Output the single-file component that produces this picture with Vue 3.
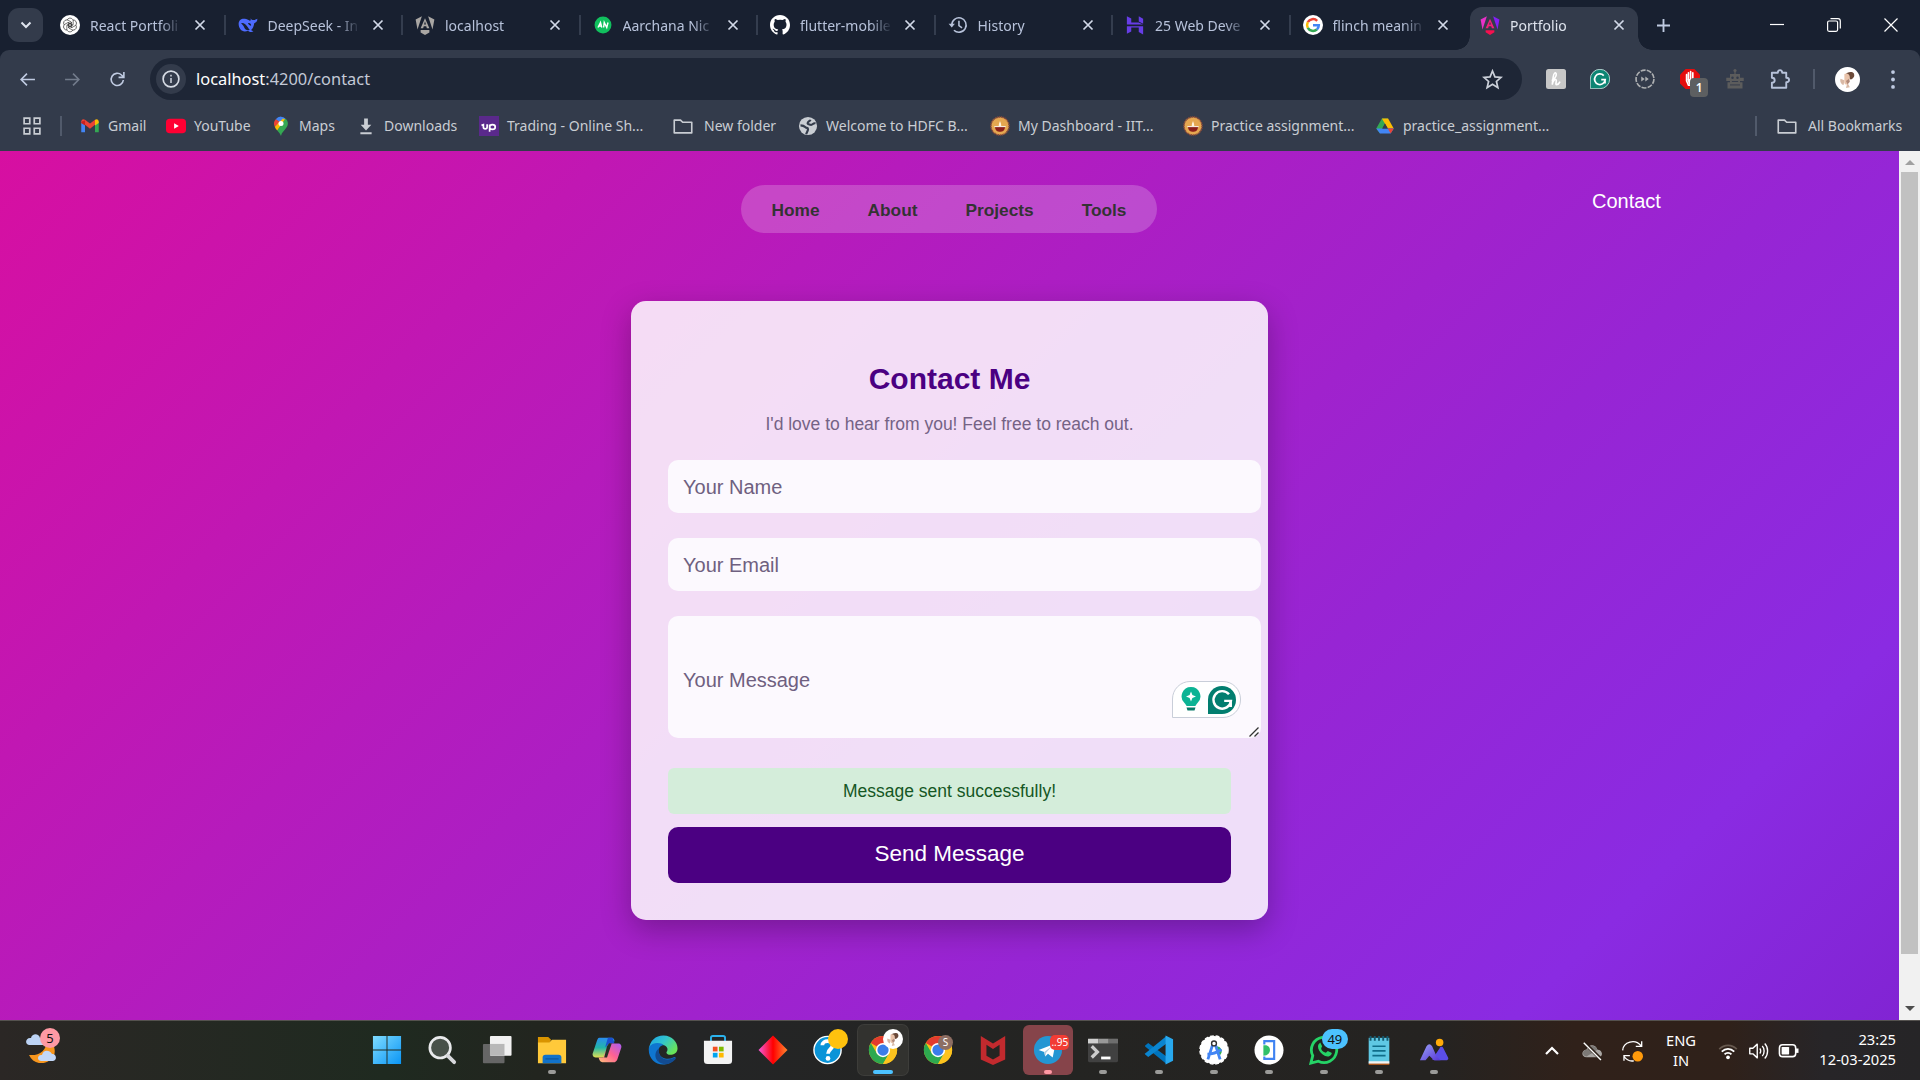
<script setup>
const svgChrome = '<circle cx="16" cy="16" r="15" fill="#fbc116"/><path d="M16 16 L3 8.5 A15 15 0 0 1 29 8.5 L16 8.5Z" fill="#e33b2e"/><path d="M3 8.5 A15 15 0 0 0 16 31 L22.5 19.8 L9.5 19.8Z" fill="#2da94f"/><path d="M29 8.5 H16 L22.5 19.8 L16 31 A15 15 0 0 0 29 8.5Z" fill="#fcc31e"/><circle cx="16" cy="16" r="7.6" fill="#fff"/><circle cx="16" cy="16" r="6" fill="#3b7de9"/>'

const petal = (a) => `<path d="M11.500 8a5 5 0 0 1 9-.5c1 2 .5 3 .5 8l-5 3-5-3" transform="rotate(${a} 16 16)"/>`

const icons = {
  openai: '<circle cx="16" cy="16" r="16" fill="#fff"/><g fill="none" stroke="#333" stroke-width="1.100">' + [0, 60, 120, 180, 240, 300].map(petal).join('') + '</g>',
  deepseek: '<path d="M1 14c0-6 5-9 10-8 3 0 5 2 8 3 1 1 2-1 1-4 1 2 3 3 5 3 2 0 4-1 6-2 0 4-2 6-5 7-1 5-2 8-5 11 1 1 3 2 4 2-3 2-7 1-9-1C8 29 1 23 1 14z" fill="#4d6bfe"/><path d="M5 13c4-1 8 2 11 7 1 2 2 3 3 4-5 1-8-1-9-4-1-3-3-5-5-7zM16 13c3-1 5 1 5 4-2 0-4-2-5-4z" fill="#182030"/>',
  angularGray: '<path d="M1 7 11 2 4 23 1 7zM31 7 21 2l7 21zM16 5l7 16h-4l-1-3h-4l-1 3H9z" fill="#a9a6a3"/><path d="M14.5 15h3L16 10z" fill="#182030"/><path d="M9 24h14v4l-7 4-7-4z" fill="#a9a6a3"/>',
  an: '<circle cx="16" cy="16" r="13.500" fill="#11c05e"/><path d="m8 20 4-8 2 8m-4-2.500h4M17 20l1-8 4 8 2-8" fill="none" stroke="#fff" stroke-width="2.300"/>',
  github: '<path d="M16 0C7 0 0 7 0 16c0 7 4.600 13 11 15.200.8.100 1.100-.3 1.100-.8v-3c-4.500 1-5.400-2-5.400-2-.7-1.900-1.800-2.400-1.800-2.400-1.500-1 .1-1 .1-1 1.600.1 2.500 1.700 2.500 1.700 1.400 2.500 3.800 1.800 4.700 1.400.1-1.100.6-1.800 1-2.200-3.600-.4-7.300-1.800-7.300-7.900 0-1.800.6-3.200 1.700-4.300-.2-.4-.7-2.100.2-4.300 0 0 1.300-.4 4.400 1.600a15 15 0 0 1 8 0c3-2 4.400-1.600 4.400-1.600.9 2.200.3 3.900.2 4.300 1 1.100 1.600 2.500 1.600 4.300 0 6.200-3.700 7.500-7.300 7.900.6.5 1.100 1.500 1.100 3v4.500c0 .4.300.9 1.100.8C27.500 29 32 23 32 16 32 7 25 0 16 0z" fill="#fff"/>',
  history: '<path d="M6 16a11.500 11.500 0 1 1 3.500 8.300M17.500 9v8l5 3.500" fill="none" stroke="#b7c2da" stroke-width="2.500"/><path d="M1 14h10l-5 6z" fill="#b7c2da"/>',
  hostinger: '<path d="M3 2l7 3.500V12h12l7 3H3zM22 2l7 4v8l-7-3.500zM3 30V18h19l7 0v2H10v6.500zM22 20h7v11l-7-4z" fill="#673de6"/>',
  google: '<circle cx="16" cy="16" r="16" fill="#fff"/><g fill="none" stroke-width="4"><path d="M22.700 9.300A9.500 9.500 0 0 0 7.700 11.500" stroke="#ea4335"/><path d="M7.700 11.500a9.500 9.500 0 0 0 0 9" stroke="#fbbc05"/><path d="M7.700 20.500a9.500 9.500 0 0 0 14.500 2.700" stroke="#34a853"/><path d="M16 16.300h9.300a9.500 9.500 0 0 1-3.100 6.900" stroke="#4285f4"/></g>',
  angular: '<defs><linearGradient id="ang" x1="0" y1="0" x2="1" y2="0"><stop offset="0" stop-color="#f42bb5"/><stop offset=".5" stop-color="#ee1a86"/><stop offset="1" stop-color="#7a1cff"/></linearGradient></defs><path d="M1 7 11 2 4 23 1 7z" fill="#e831c8"/><path d="M31 7 21 2l7 21z" fill="#8320f5"/><path d="M16 6l7 15h-4l-1-3h-4l-1 3H9z" fill="#f0207a"/><path d="M14.500 15h3L16 11z" fill="#333b4b"/><path d="M9 24.500h14v3L16 32l-7-4.500z" fill="#f5104f"/>',

  gmail: '<path d="M2 8v18h6V14z" fill="#4285f4"/><path d="M30 8v18h-6V14z" fill="#34a853"/><path d="M2 10c0-5 3-6 6-4l8 6 8-6v8l-8 6.500L8 14 2 11z" fill="#ea4335"/><path d="M24 6c3-2 6-1 6 4v1l-6 4z" fill="#fbbc04"/><path d="M2 9v2l6 4V7z" fill="#c5221f"/>',
  youtube: '<rect y="4.500" width="32" height="23" rx="6" fill="#f03"/><path d="m13 11.500 7.500 4.500-7.500 4.500z" fill="#fff"/>',
  maps: '<path d="M16 1a11 11 0 0 0-8.500 4l8.500 7 7-8a11 11 0 0 0-7-3z" fill="#4285f4"/><path d="M7.500 5A11 11 0 0 0 6 17l9-7z" fill="#ea4335"/><path d="M6 17c1 2 2 4 4 6L24 6l-5-2z" fill="#fbbc04"/><path d="M23 4c5 4 5 10 2 14-4 6-8 8-9 14-1-3-3-6-6-9z" fill="#34a853"/><circle cx="16" cy="12" r="4" fill="#fff"/>',
  download: '<path d="M13 4h6v10h5.500L16 23 7.500 14H13zM7 26h18v3H7z" fill="#c9cdd3"/>',
  up: '<path d="M0 0h32v32H0z" fill="#5a298b"/><path d="M4 15l3-1v3.500c0 4 6 4 6 0V13M17 25V13.500M17 17.500c0-5 9-5 9 0s-9 5-9 0" fill="none" stroke="#fff" stroke-width="2.700"/>',
  folder: '<path d="M2 6.500h10l3.500 3.500H30V27H2z" fill="none" stroke="#c9cdd3" stroke-width="2.600" stroke-linejoin="round"/>',
  globe: '<circle cx="16" cy="16" r="14.500" fill="#c9cdd3"/><path d="M4 15c5 0 6 1 8 3s4 0 4 3-2 5-3 8M28 12c-4-2-4 3-8 2-3-1-6-1-4-4 1-2 3-1 4-4" fill="none" stroke="#333b4b" stroke-width="3.500"/>',
  iit: '<circle cx="16" cy="16" r="14.500" fill="#e5a750" stroke="#8c4b3a" stroke-width="2.500" stroke-dasharray="2 1"/><path d="M8 17h16c0 6-4 8-8 8s-8-2-8-8z" fill="#8b1f1a"/><path d="M14 16c0-4 1-5 2-8 1 3 2 4 2 8z" fill="#fff2dd"/><path d="M7 17h18" stroke="#fff" stroke-width="1.500"/>',
  drive: '<path d="M11 4h10l-5 8-8 16-6-8z" fill="#34a853"/><path d="M11 4h10l9 16H20.500z" fill="#fbbc04"/><path d="M8 28 2 20h28l-5 8z" fill="#4285f4"/><path d="M20.500 20H30l-5 8z" fill="#ea4335"/><path d="m16 12 4.500 8h-9z" fill="#333b4b"/>',

  honey: '<rect width="32" height="32" rx="4" fill="#c7c7c7"/><path d="M10 18c6-3 8-11 5-12-4 0-4 12-5 19 1-6 4-9 6-8s-2 8 1 8 4-2 5-4" fill="none" stroke="#fff" stroke-width="2.600" stroke-linecap="round"/>',
  grammarly: '<path d="M.5 31.500V16A15.500 15.500 0 1 1 16 31.500z" fill="#0d8573" stroke="#b7d6d3" stroke-width="1.500"/><path d="M22 10.500a8.500 8.500 0 1 0 2.300 6.500H18m6 0v6" fill="none" stroke="#fff" stroke-width="2.800"/>',
  ffwd: '<circle cx="16" cy="16" r="14.300" fill="none" stroke="#aeb0b2" stroke-width="2.600" stroke-dasharray="8 1.980"/><path d="m10 12 5.500 4-5.500 4zm6.500 0 5.500 4-5.500 4z" fill="#aeb0b2"/>',
  adblock: '<path d="M9 0h14l9 9v14l-9 9H9l-9-9V9z" fill="#e50d0d"/><path d="M10.500 9v10l3 7h8l3-9M13.500 18V6M17 17V4M20.500 17V6" fill="none" stroke="#fff" stroke-width="2.600" stroke-linecap="round"/><path d="M12 16h10v9h-8z" fill="#fff"/>',
  robot: '<circle cx="16" cy="2.500" r="2.500" fill="#5c5c5c"/><path d="M15 3h2v5h7v6h6v5h-6v2h4v10H4V21h4v-2H2v-5h6V8h7z" fill="#5c5c5c"/><circle cx="12" cy="14" r="2" fill="#333b4b"/><circle cx="20" cy="14" r="2" fill="#333b4b"/><path d="M11 20h10M8 25.500h16" stroke="#333b4b" stroke-width="1.500"/>',
  puzzle: '<path d="M3 6h9.500c0-5.500 7-5.500 7 0H26v8c6 0 6 7 0 7v9H3v-8c6 0 6-8 0-8z" fill="none" stroke="#b7c2da" stroke-width="3" stroke-linejoin="round"/>',
  avatar: '<circle cx="16" cy="16" r="16" fill="#fff"/><path d="M13 10c2-4 9-5 11-2 2 4-1 7-4 8z" fill="#6b4a3a"/><path d="M12 9c3-2 7 0 7 4l-1 7c-3 4-7 3-6-2z" fill="#e9c3aa"/><path d="M7 15l5 2-1 6c-3-1-5-4-4-8zM16 20l3 6-5 1z" fill="#d9b9a5"/><path d="m14 18 4-3 1 4-3 3z" fill="#b08a7a"/>',
  back: '<path d="M30 16H4M15 5 4 16l11 11" fill="none" stroke="#c0cbe2" stroke-width="3"/>',
  forward: '<path d="M2 16h26M17 5l11 11-11 11" fill="none" stroke="#727b8b" stroke-width="3"/>',
  reload: '<path d="M27 17a11.500 11.500 0 1 1-3.500-9.500L28 12M28 2v10H18" fill="none" stroke="#c0cbe2" stroke-width="3"/>',
  info: '<circle cx="16" cy="16" r="14" fill="none" stroke="#d6dbe4" stroke-width="3"/><path d="M16 14v9M16 8.500v3" stroke="#d6dbe4" stroke-width="2.600"/>',
  star: '<path d="m16 3 3.700 9 9.300.800-7 6.200 2.200 9.500L16 23.400 7.800 28.500 10 19 3 12.800l9.300-.8z" fill="none" stroke="#ccd1da" stroke-width="2.600"/>',
  apps: '<path d="M2 2h10v10H2zM20 2h10v10H20zM2 20h10v10H2zM20 20h10v10H20z" fill="none" stroke="#c9cdd3" stroke-width="3"/>',

  win: '<defs><linearGradient id="wi" x1="0" y1="0" x2="1" y2="1"><stop offset="0" stop-color="#7fdcff"/><stop offset="1" stop-color="#0a95f5"/></linearGradient></defs><path d="M1 1h14.500v14.500H1zM16.500 1H31v14.500H16.500zM1 16.500h14.500V31H1zM16.500 16.500H31V31H16.500z" fill="url(#wi)"/>',
  search: '<circle cx="14" cy="13.500" r="11" fill="#48514a" stroke="#e9eaec" stroke-width="2.800"/><path d="m22 22 7 7" stroke="#d7d8dc" stroke-width="4" stroke-linecap="round"/>',
  taskview: '<rect x="1" y="9.500" width="23" height="20.500" rx="1" fill="#666"/><rect x="8.500" y="1" width="23" height="21" rx="1" fill="#f1f1f1"/><path d="M8.500 9.500H24V22H8.500z" fill="#b8b8b8"/>',
  explorer: '<path d="M1 2h11l3 3-2 4H1z" fill="#d99400"/><path d="M1 8h12l3-3h15v25H1z" fill="#ffc93a"/><path d="M6 30v-6c0-2 1-3 3-3h14c2 0 3 1 3 3v6z" fill="#1172c9"/><path d="M9 25.500h14" stroke="#0b4c91"/>',
  copilot: '<defs><linearGradient id="c1" x1="0" y1="0" x2="0" y2="1"><stop offset="0" stop-color="#2a8df0"/><stop offset=".5" stop-color="#22b6a8"/><stop offset="1" stop-color="#e2e052"/></linearGradient><linearGradient id="c2" x1="1" y1="0" x2="0" y2="1"><stop offset="0" stop-color="#a95cf5"/><stop offset=".5" stop-color="#ff6292"/><stop offset="1" stop-color="#ffc07a"/></linearGradient></defs><path d="M8 3h13c2 0 3 2 3 4h-5l-5 15c-1 2-3 2-5 2H4c-3 0-4-3-3-5L5 7c1-2 1-4 3-4z" fill="url(#c1)"/><path d="M17 3h5l2 6h-6l-4 4z" fill="#1a4fd0"/><path d="M24 9h4c3 0 4 3 3 5l-4 12c-1 2-2 3-4 3H11c-2 0-3-2-4-5h5l5-13c1-2 3-2 7-2z" fill="url(#c2)"/><path d="m16 12 2-3h3l-5 15h-3z" fill="#253026"/>',
  edge: '<defs><linearGradient id="e1" x1="0" y1="0" x2="1" y2=".6"><stop offset="0" stop-color="#1ba0e8"/><stop offset=".5" stop-color="#31c4cf"/><stop offset="1" stop-color="#69e45a"/></linearGradient></defs><path d="M1 15C2 6 8 .5 16.500.5 26 .5 31.500 8 31.500 14c0 5-4 7-8 7-3 0-5-2-3-4 2-5-5-8-9-6-5 2-10 6-10.500 4z" fill="url(#e1)"/><path d="M1 13c3-5 12-6 16-2-5 0-7 5-5 9 2 5 9 7 15 4 2-1 3 0 2 1-4 5-9 6.500-13 6.500C7 31.500-.5 24 1 13z" fill="#0f76d0"/><path d="M12 14c-2 5 2 12 9 12 3 0 5-1 7-2 2 0 2 1 1 2-5 6-13 6-17 3-6-4-5-12 0-15z" fill="#124b91"/>',
  store: '<path d="M8.500 8V3c0-1 1-2 2-2h11c1 0 2 1 2 2v5" fill="none" stroke="#2bb3ee" stroke-width="2"/><path d="M1 6h30v21c0 3-1 4-4 4H5c-3 0-4-1-4-4z" fill="#f3f3f3"/><path d="M10.500 12.500h5v5h-5z" fill="#f25022"/><path d="M17 12.500h5v5h-5z" fill="#7fba00"/><path d="M10.500 19h5v5h-5z" fill="#00a4ef"/><path d="M17 19h5v5h-5z" fill="#ffb900"/>',
  diamond: '<defs><linearGradient id="di"><stop offset=".05" stop-color="#f551c7"/><stop offset=".5" stop-color="#f00"/><stop offset=".95" stop-color="#ff7a2a"/></linearGradient></defs><path d="m16 .5 15.500 15.500L16 31.500.500 16z" fill="url(#di)"/>',
  help: '<circle cx="15.500" cy="16" r="14.500" fill="#0a94d8" stroke="#fff" stroke-width="1.500"/><path d="M10 11c0-6 11-6 11 0 0 4-5 4-5 9" fill="none" stroke="#fff" stroke-width="4"/><circle cx="16" cy="25" r="2.500" fill="#fff"/>',
  chrome: svgChrome,
  mcafee: '<path d="m3 1 13 8L29 1v25l-13 6-13-6z" fill="#c22a2e"/><path d="m9 10.500 7 4.500 7-4.500V22l-7 4-7-4z" fill="#242422"/>',
  telegram: '<circle cx="16" cy="16" r="15" fill="#2496d3"/><path d="M6 16 24 9l-3 15-5-4-3 3-1-5z" fill="#fff"/><path d="m12 18 8-6-6 7-1 4z" fill="#b6cfe0"/>',
  terminal: '<rect y="4" width="32" height="25" rx="1.500" fill="#414141"/><path d="M0 4h11v5H0z" fill="#d0d0d0"/><path d="M11 4h11v5H11z" fill="#999"/><path d="M22 4h10v5H22z" fill="#6e6e6e"/><path d="m4 12 6 6-6 6" fill="none" stroke="#ccc" stroke-width="3.500"/><path d="M14 24.500h10" stroke="#fff" stroke-width="3"/>',
  vscode: '<path d="m1 11 3-2.500 20 15V31L3 23z" fill="none"/><path d="m1 11.500 3.500-3L24 23v8L1.500 12.500z" fill="#0074bd"/><path d="m1 20.500 3.500 3L24 9V1L1.500 19.500z" fill="#0a85d0"/><path d="m23 .5 8 4v23l-8 4z" fill="#28a8ee"/>',
  studio: '<circle cx="16" cy="16" r="15" fill="#fff" stroke="#fff" stroke-width="1.500" stroke-dasharray="4 2"/><path d="M19 12a5.500 5.500 0 0 1 4 9l-3-1z" fill="#2fae58"/><path d="M15 9 9.500 26M17 9l5.500 17M9 20.500c4 0 9-1 15-5" fill="none" stroke="#4285f4" stroke-width="3"/><circle cx="16" cy="9" r="2.600" fill="#fff" stroke="#333" stroke-width="1.500"/>',
  emulator: '<circle cx="16" cy="16" r="15.500" fill="#fff"/><path d="M10 11c5-1 7 2 7 5s-2 6-7 6z" fill="#30c06a"/><path d="M11 10V6.500h10.500v19H11V23" fill="none" stroke="#3f83f2" stroke-width="2.300"/>',
  whatsapp: '<path d="m2 30 2-8A13.500 13.500 0 1 1 10 28z" fill="#20231f" stroke="#25d366" stroke-width="3"/><path d="M11 9c-4 3 1 13 9 14 3 0 5-3 4-4l-4-2-2 2c-3-1-5-3-5-5l1-2-2-4z" fill="#25d366"/>',
  notepad: '<path d="M5 3h22v27H5z" fill="#5fc8e4"/><path d="M5 28h22v3H5z" fill="#f3f3f3"/><path d="M5 30.500h22V32H5z" fill="#a8541b"/><path d="M7 1v5m4.500-5v5M16 1v5m4.500-5v5M25 1v5" stroke="#14596f" stroke-width="2"/><path d="M9 12h14M9 17h14M9 22h14" stroke="#106d8a" stroke-width="1.800"/>',
  photos: '<defs><linearGradient id="ph" x1="0" y1="0" x2="1" y2="1"><stop offset="0" stop-color="#9aa2f6"/><stop offset="1" stop-color="#5636d6"/></linearGradient></defs><circle cx="22" cy="8" r="4" fill="#ffaa09"/><path d="M14 26 22 14c1-2 3-2 4 0l5 10c1 2-1 3-2 3H17z" fill="#5b4ee6"/><path d="M1 27 8 12c2-3 4-3 6 0l4 9c1 2 3 4 5 6H16l-5-5-4 5z" fill="url(#ph)"/>',

  weather: '<path d="M3 24c10 1 18-4 18-16 9 4 10 16 4 20-7 7-18 5-22-4z" fill="#f7961e"/><path d="M17 15c4-2 4-5 4-8 4 2 6 6 6 9z" fill="#ffb72c"/><path d="M3 14c-5-1-3-8 2-7 1-5 8-5 9 0h3v7z" fill="#bcd3f5"/><path d="M15 30c-5-1-3-7 1-6 1-5 7-6 10-1 4-1 6 6 1 7z" fill="#c3d8f8"/>',
  cloudoff: '<path d="M8 25c-8 0-8-11 0-11 2-8 13-9 16 0 8 0 9 11 1 11z" fill="#a9a6a3"/><path d="M10 13c4-7 12-5 14 1L8 24c-7-1-7-10 2-11z" fill="#7c7976"/><path d="m5 4 24 24" stroke="#2c2018" stroke-width="5"/><path d="m4 4 25 25" stroke="#fff" stroke-width="2"/>',
  sync: '<path d="M1 15C2 2 20-3 29 8M30 1v8h-9M3 31v-8h9M3 24c4 6 9 8 15 7" fill="none" stroke="#fff" stroke-width="2"/><circle cx="24" cy="24" r="8" fill="#ff9a0b"/>',
  wifi: '<path d="M2 13c8-8 20-8 28 0" fill="none" stroke="#67594f" stroke-width="2.700"/><path d="M6 17c6-6 14-6 20 0M10.500 21.500c3-3.500 8-3.500 11 0" fill="none" stroke="#fff" stroke-width="2.800"/><circle cx="16" cy="26" r="3" fill="#fff"/>',
  volume: '<path d="M2 11.500h5L14 5v22l-7-6.500H2z" fill="none" stroke="#fff" stroke-width="2.200" stroke-linejoin="round"/><path d="M18 12c2 2 2 6 0 8M22 8c4 4 4 12 0 16M26 4c6 6 6 18 0 24" fill="none" stroke="#fff" stroke-width="2.200"/>',
  battery: '<rect x="1.500" y="6" width="26" height="19" rx="5" fill="none" stroke="#fff" stroke-width="2.500"/><rect x="5" y="9.500" width="12" height="12" rx="1" fill="#fff"/><path d="M30 12v7" stroke="#fff" stroke-width="4"/>',
}

const tabs = [
  { icon: 'openai', title: 'React Portfoli' },
  { icon: 'deepseek', title: 'DeepSeek - In' },
  { icon: 'angularGray', title: 'localhost' },
  { icon: 'an', title: 'Aarchana Nic' },
  { icon: 'github', title: 'flutter-mobile' },
  { icon: 'history', title: 'History' },
  { icon: 'hostinger', title: '25 Web Deve' },
  { icon: 'google', title: 'flinch meanin' },
]

const bookmarks = [
  { icon: 'gmail', label: 'Gmail', width: 86 },
  { icon: 'youtube', label: 'YouTube', width: 105 },
  { icon: 'maps', label: 'Maps', width: 85 },
  { icon: 'download', label: 'Downloads', width: 123 },
  { icon: 'up', label: 'Trading - Online Sh...', width: 194 },
  { icon: 'folder', label: 'New folder', width: 125, gap: 11 },
  { icon: 'globe', label: 'Welcome to HDFC B...', width: 192 },
  { icon: 'iit', label: 'My Dashboard - IIT...', width: 193 },
  { icon: 'iit', label: 'Practice assignment...', width: 192 },
  { icon: 'drive', label: 'practice_assignment...', width: 190 },
]

const extensions = ['honey', 'grammarly', 'ffwd', 'adblock', 'robot', 'puzzle']

const apps = [
  { icon: 'win' },
  { icon: 'search' },
  { icon: 'taskview' },
  { icon: 'explorer', open: true },
  { icon: 'copilot' },
  { icon: 'edge' },
  { icon: 'store' },
  { icon: 'diamond' },
  { icon: 'help', dot: true },
  { icon: 'chrome', active: true, avatar: true },
  { icon: 'chrome', initial: 'S' },
  { icon: 'mcafee' },
  { icon: 'telegram', open: true, alert: '..95' },
  { icon: 'terminal', open: true },
  { icon: 'vscode', open: true },
  { icon: 'studio', open: true },
  { icon: 'emulator', open: true },
  { icon: 'whatsapp', open: true, count: '49' },
  { icon: 'notepad', open: true },
  { icon: 'photos', open: true },
]
</script>

<template>
  <div class="screen">
    <header class="tabstrip">
      <div class="tab-search">
        <svg width="12" height="8" viewBox="0 0 12 8"><path d="m1.500 1.500 4.500 4.500 4.500-4.500" fill="none" stroke="#dfe4ee" stroke-width="2" /></svg>
      </div>
      <div v-for="(t, i) in tabs" :key="i" class="tab">
        <svg class="fav" viewBox="0 0 32 32" v-html="icons[t.icon]"></svg>
        <span class="tab-title">{{ t.title }}</span>
        <svg class="x" viewBox="0 0 12 12"><path d="m1.500 1.500 9 9m0-9-9 9" /></svg>
      </div>
      <div class="tab tab-active">
        <svg class="fav" viewBox="0 0 32 32" v-html="icons.angular"></svg>
        <span class="tab-title">Portfolio</span>
        <svg class="x" viewBox="0 0 12 12"><path d="m1.500 1.500 9 9m0-9-9 9" /></svg>
      </div>
      <svg class="plus" viewBox="0 0 14 14"><path d="M7 0v14M0 7h14" /></svg>
      <div class="win-controls">
        <svg width="14" height="14" viewBox="0 0 14 14"><path d="M0 6.500h14" /></svg>
        <svg width="14" height="14" viewBox="0 0 14 14"><rect x=".6" y="3" width="10" height="10.300" rx="1.500" /><path d="M3.500.7H11a2.300 2.300 0 0 1 2.300 2.300v7.500" /></svg>
        <svg width="14" height="14" viewBox="0 0 14 14"><path d="m.5.5 13 13m0-13-13 13" /></svg>
      </div>
    </header>

    <section class="chrome">
      <div class="toolbar">
        <svg class="nav-ico" viewBox="0 0 32 32" v-html="icons.back"></svg>
        <svg class="nav-ico" viewBox="0 0 32 32" v-html="icons.forward"></svg>
        <svg class="nav-ico" viewBox="0 0 32 32" v-html="icons.reload"></svg>
        <div class="omnibox">
          <span class="info"><svg width="18" height="18" viewBox="0 0 32 32" v-html="icons.info"></svg></span>
          <span class="url"><b>localhost</b>:4200/contact</span>
          <svg class="star" viewBox="0 0 32 32" v-html="icons.star"></svg>
        </div>
        <div class="extensions">
          <span v-for="e in extensions" :key="e" class="ext">
            <svg width="20" height="20" viewBox="0 0 32 32" v-html="icons[e]"></svg>
            <i v-if="e === 'adblock'" class="ext-badge">1</i>
          </span>
        </div>
        <i class="divider"></i>
        <svg class="profile" viewBox="0 0 32 32" v-html="icons.avatar"></svg>
        <svg class="kebab" viewBox="0 0 4 20"><circle cx="2" cy="2.200" r="2" /><circle cx="2" cy="10" r="2" /><circle cx="2" cy="17.800" r="2" /></svg>
      </div>
      <div class="bookmarks">
        <svg class="apps" viewBox="0 0 32 32" v-html="icons.apps"></svg>
        <i class="divider"></i>
        <div v-for="b in bookmarks" :key="b.label" class="bm" :style="{ width: b.width + 'px', gap: (b.gap || 8) + 'px' }">
          <svg width="20" height="20" viewBox="0 0 32 32" v-html="icons[b.icon]"></svg><span>{{ b.label }}</span>
        </div>
        <i class="divider end"></i>
        <div class="bm all">
          <svg width="22" height="20" viewBox="0 0 32 32" v-html="icons.folder"></svg><span>All Bookmarks</span>
        </div>
      </div>
    </section>

    <main class="viewport">
      <div class="page">
        <div class="page-top">
          <nav class="pill">
            <a>Home</a><a>About</a><a>Projects</a><a>Tools</a>
          </nav>
          <a class="contact-link">Contact</a>
        </div>
        <form class="card" @submit.prevent>
          <h1>Contact Me</h1>
          <p class="lead">I'd love to hear from you! Feel free to reach out.</p>
          <div class="field">Your Name</div>
          <div class="field">Your Email</div>
          <div class="field area">
            Your Message
            <span class="assist">
              <svg width="20" height="31" viewBox="0 0 20 31"><path d="M10 3a9.300 9.300 0 0 0-6.500 16c1.500 1.500 1.500 3 2.500 3h8c1 0 1-1.500 2.500-3A9.300 9.300 0 0 0 10 3z" fill="#0bb394" /><path d="m10 7.500 1.400 3.600 3.600 1.400-3.600 1.400-1.400 3.600-1.400-3.600L5 12.500l3.600-1.400z" fill="#fff" /><path d="M5.500 23.500h9l-1 3h-7z" fill="#067a68" /></svg>
              <svg width="28" height="28" viewBox="0 0 32 32"><path d="M0 32V16A16 16 0 1 1 16 32z" fill="#027e6f" /><path d="M24 9.500a10 10 0 1 0 2.200 7.500H18.500m7.500 0v7" fill="none" stroke="#fff" stroke-width="2.800" /></svg>
            </span>
            <svg class="grip" viewBox="0 0 10 10"><path d="M.5 9.500 9.500.500M5.500 9.500l4-4" /></svg>
          </div>
          <div class="success">Message sent successfully!</div>
          <button type="submit">Send Message</button>
        </form>
      </div>
      <div class="scrollbar">
        <svg width="10" height="5" viewBox="0 0 10 5"><path d="m0 5 5-5 5 5z" fill="#a0a0a0" /></svg>
        <div class="thumb"></div>
        <svg width="10" height="5" viewBox="0 0 10 5"><path d="m0 0 5 5 5-5z" fill="#4d4d4d" /></svg>
      </div>
    </main>

    <footer class="taskbar">
      <div class="weather">
        <svg width="32" height="32" viewBox="0 0 32 32" v-html="icons.weather"></svg>
        <span>5</span>
      </div>
      <div class="dock">
        <div v-for="(a, i) in apps" :key="i" class="app" :class="{ active: a.active, alert: a.alert, open: a.open }">
          <svg class="app-ico" viewBox="0 0 32 32" v-html="icons[a.icon]"></svg>
          <i v-if="a.dot" class="dot"></i>
          <svg v-if="a.avatar" class="mini" viewBox="0 0 32 32" v-html="icons.avatar"></svg>
          <i v-if="a.initial" class="initial">{{ a.initial }}</i>
          <i v-if="a.alert" class="alert-badge">{{ a.alert }}</i>
          <i v-if="a.count" class="count">{{ a.count }}</i>
        </div>
      </div>
      <div class="tray">
        <svg class="up-arrow" width="14" height="9" viewBox="0 0 14 9"><path d="m1 8 6-6 6 6" fill="none" stroke="#fff" stroke-width="2.200" /></svg>
        <svg class="cloud" width="22" height="22" viewBox="0 0 32 32" v-html="icons.cloudoff"></svg>
        <svg class="sync" width="21" height="22" viewBox="0 0 32 32" v-html="icons.sync"></svg>
        <div class="lang">ENG<br />IN</div>
        <svg class="wifi" width="20" height="20" viewBox="0 0 32 32" v-html="icons.wifi"></svg>
        <svg class="vol" width="21" height="20" viewBox="0 0 32 32" v-html="icons.volume"></svg>
        <svg class="bat" width="21" height="20" viewBox="0 0 32 32" v-html="icons.battery"></svg>
        <div class="clock">23:25<br />12-03-2025</div>
      </div>
    </footer>
  </div>
</template>

<style>
body {
  margin: 0;
  overflow: hidden;
}
</style>

<style scoped>
.screen {
  width: 1920px;
  height: 1080px;
  display: flex;
  flex-direction: column;
  overflow: hidden;
  background: #182030;
  font-family: "Noto Sans", "Open Sans", sans-serif;
  font-size: 14px;
}
.screen * {
  box-sizing: border-box;
}
svg {
  display: block;
  flex: none;
}
i {
  font-style: normal;
}

/* Tab strip */
.tabstrip {
  height: 50px;
  flex: none;
  display: flex;
  align-items: center;
  padding-left: 8px;
}
.tab-search {
  width: 35px;
  height: 34px;
  margin-right: 4px;
  border-radius: 11px;
  background: #333b4b;
  display: grid;
  place-items: center;
}
.tab {
  position: relative;
  width: 177.5px;
  height: 43px;
  flex: none;
  display: flex;
  align-items: center;
  padding: 0 0 7px 13px;
  align-self: flex-end;
  color: #b7c2da;
}
.tab:not(.tab-active):not(:nth-child(9))::after {
  content: "";
  position: absolute;
  right: -1px;
  top: 8px;
  width: 2px;
  height: 20px;
  background: #343d4e;
}
.fav {
  width: 20px;
  height: 20px;
}
.tab-title {
  width: 92px;
  margin-left: 10px;
  margin-right: -2px;
  white-space: nowrap;
  -webkit-mask-image: linear-gradient(90deg, #000 70px, transparent 92px);
  mask-image: linear-gradient(90deg, #000 70px, transparent 92px);
}
.x {
  width: 12px;
  height: 12px;
  margin-left: 14px;
}
.x path {
  fill: none;
  stroke: #d2d9e8;
  stroke-width: 1.7;
}
.tab-active {
  width: 168px;
  margin-left: 3px;
  padding-left: 10px;
  background: #333b4b;
  border-radius: 12px 12px 0 0;
  color: #dfe4ee;
}
.tab-active .x {
  margin-left: 13px;
}
.tab-active::before,
.tab-active::after {
  content: "";
  position: absolute;
  bottom: 0;
  width: 14px;
  height: 14px;
}
.tab-active::before {
  left: -14px;
  background: radial-gradient(circle at 0 0, transparent 13.5px, #333b4b 14px);
}
.tab-active::after {
  right: -14px;
  background: radial-gradient(circle at 100% 0, transparent 13.5px, #333b4b 14px);
}
.plus {
  width: 13px;
  height: 13px;
  margin-left: 19px;
}
.plus path {
  stroke: #c0cbe2;
  stroke-width: 2;
}
.win-controls {
  margin-left: auto;
  margin-right: 22px;
  display: flex;
  gap: 43px;
}
.win-controls svg {
  fill: none;
  stroke: #fff;
  stroke-width: 1.2;
}

/* Toolbar */
.chrome {
  height: 101px;
  flex: none;
  background: #333b4b;
  border-radius: 9px 9px 0 0;
}
.toolbar {
  height: 58px;
  display: flex;
  align-items: center;
  padding-left: 19px;
}
.nav-ico {
  width: 17px;
  height: 17px;
  margin-right: 28px;
}
.omnibox {
  width: 1372px;
  height: 42px;
  margin-left: -4px;
  border-radius: 21px;
  background: #1e2636;
  display: flex;
  align-items: center;
  padding-left: 6px;
}
.info {
  width: 30px;
  height: 30px;
  border-radius: 50%;
  background: #333b4b;
  display: grid;
  place-items: center;
}
.url {
  margin-left: 10px;
  padding-bottom: 1px;
  font-size: 16.4px;
  color: #c3c9d6;
}
.url b {
  font-weight: 400;
  color: #fff;
}
.star {
  width: 21px;
  height: 21px;
  margin-left: auto;
  margin-right: 19px;
}
.extensions {
  display: flex;
  gap: 24.9px;
  margin-left: 23.5px;
}
.ext {
  position: relative;
}
.ext-badge {
  position: absolute;
  left: 10px;
  top: 9px;
  width: 18px;
  height: 19px;
  border-radius: 4px;
  background: #5d5f61;
  color: #fff;
  font-size: 12px;
  font-weight: 600;
  line-height: 20px;
  text-align: center;
}
.divider {
  width: 2px;
  height: 20px;
  background: #515a6b;
}
.toolbar .divider {
  margin-left: 23px;
}
.profile {
  width: 25px;
  height: 25px;
  margin-left: 20px;
}
.kebab {
  width: 4px;
  height: 19px;
  margin-left: 31px;
  fill: #c0cbe2;
}

/* Bookmarks bar */
.bookmarks {
  height: 36px;
  display: flex;
  align-items: center;
  padding-left: 23px;
  color: #c9cdd3;
}
.apps {
  width: 18px;
  height: 18px;
  margin-right: 19px;
}
.apps + .divider {
  margin-right: 18px;
}
.bm {
  display: flex;
  align-items: center;
  gap: 8px;
  flex: none;
  white-space: nowrap;
}
.bm span {
  padding-bottom: 2px;
}
.divider.end {
  margin-left: auto;
}
.all {
  margin-left: 19px;
  width: 144px;
  gap: 10px;
}

/* Web page */
.viewport {
  height: 869px;
  flex: none;
  display: flex;
  font-family: "Liberation Sans", Arial, sans-serif;
}
.page {
  flex: 1;
  display: flex;
  flex-direction: column;
  align-items: center;
  background: linear-gradient(135deg, #d70fa1 0%, #b61bbc 33%, #9725d4 66%, #8a2be2 86%, #8124d3 100%);
}
.page-top {
  width: 100%;
  height: 150px;
  flex: none;
  display: flex;
  padding-top: 34px;
}
.pill {
  height: 48px;
  width: 416px;
  margin-left: 741px;
  border-radius: 24px;
  background: rgba(255, 255, 255, 0.2);
  display: flex;
  align-items: center;
  justify-content: center;
  gap: 48px;
  font-size: 17.3px;
  font-weight: 700;
  color: #333;
  padding-top: 2px;
}
.contact-link {
  margin-left: 435px;
  margin-top: 5px;
  font-size: 20px;
  line-height: 23px;
  color: #fff;
}
.card {
  width: 637px;
  height: 619px;
  padding: 60px 37px 37px;
  border-radius: 15px;
  background: rgba(255, 255, 255, 0.85);
  box-shadow: 0 10px 30px rgba(0, 0, 0, 0.27);
  display: flex;
  flex-direction: column;
}
h1 {
  margin: 1px 0 0;
  font-size: 30px;
  line-height: 34px;
  text-align: center;
  color: #4b0082;
}
.lead {
  margin: 18px 0 26px;
  font-size: 17.5px;
  line-height: 20px;
  text-align: center;
  color: #756385;
}
.field {
  position: relative;
  width: 593px;
  height: 53px;
  flex: none;
  margin-bottom: 25px;
  padding-left: 15px;
  border-radius: 10px;
  background: #fcf9fe;
  font-size: 20px;
  line-height: 54px;
  color: #6f6080;
}
.area {
  height: 122px;
  margin-bottom: 30px;
  line-height: 128px;
}
.assist {
  position: absolute;
  right: 20px;
  top: 65px;
  width: 69px;
  height: 37px;
  border: 1px solid #c9ced9;
  border-radius: 18px 18px 18px 0;
  background: #fff;
  display: flex;
  align-items: center;
  gap: 7px;
  padding-left: 8px;
}
.grip {
  position: absolute;
  right: 2px;
  bottom: 1px;
  width: 10px;
  height: 10px;
}
.grip path {
  stroke: #333;
  stroke-width: 1.3;
}
.success {
  height: 46px;
  flex: none;
  border-radius: 6px;
  background: #d4edda;
  color: #155724;
  font-size: 17.5px;
  line-height: 46px;
  text-align: center;
}
button {
  height: 56px;
  flex: none;
  margin-top: 13px;
  padding: 0 0 3px;
  border: 0;
  border-radius: 10px;
  background: #4b0082;
  color: #fff;
  font: 22.5px "Liberation Sans", Arial, sans-serif;
}
.scrollbar {
  width: 21px;
  background: #f1f1f1;
  display: flex;
  flex-direction: column;
  align-items: center;
  padding: 9px 0;
}
.thumb {
  width: 17px;
  height: 782px;
  margin: 7px 0 auto;
  background: #c1c1c1;
}

/* Taskbar */
.taskbar {
  height: 60px;
  display: flex;
  position: relative;
  border-top: 1px solid #55524f;
  background: linear-gradient(90deg, #2b2725 0, #1f2a20 20%, #22251f 28%, #242526 36%, #242422 55%, #252321 75%, #30211a 82%, #2f211a 90%, #272528 95%, #262527 100%);
  color: #fff;
}
.weather {
  position: relative;
  width: 334px;
  padding: 10px 0 0 26px;
}
.weather span {
  position: absolute;
  left: 40px;
  top: 7px;
  width: 20px;
  height: 20px;
  border-radius: 50%;
  background: #ff99a4;
  color: #111;
  font-size: 13px;
  line-height: 20px;
  text-align: center;
}
.dock {
  display: flex;
  padding: 4px 0 0 28px;
}
.app {
  position: relative;
  width: 50px;
  height: 50px;
  margin-right: 5.12px;
  border-radius: 6px;
  display: grid;
  place-items: center;
  flex: none;
}
.app-ico {
  width: 30px;
  height: 30px;
}
.app.open::after,
.app.active::after {
  content: "";
  position: absolute;
  bottom: 1px;
  left: 21px;
  width: 8px;
  height: 4px;
  border-radius: 2px;
  background: #9b9b99;
}
.app.active {
  background: #32322f;
  box-shadow: 0 0 0 1px #3d3d3a;
}
.app.active::after {
  left: 15px;
  width: 20px;
  background: #4cc2ff;
}
.app.alert {
  background: #86444a;
}
.app.alert::after {
  background: #ff99a4;
}
.dot {
  position: absolute;
  right: 5px;
  top: 4px;
  width: 20px;
  height: 20px;
  border-radius: 50%;
  background: #ffc20e;
}
.mini {
  position: absolute;
  left: 25px;
  top: 4px;
  width: 20px;
  height: 20px;
}
.initial {
  position: absolute;
  left: 25px;
  top: 10px;
  width: 15px;
  height: 15px;
  border-radius: 50%;
  background: #8d6e63;
  font-size: 10px;
  line-height: 15px;
  text-align: center;
}
.alert-badge {
  position: absolute;
  left: 27px;
  top: 10px;
  width: 19px;
  height: 15px;
  border-radius: 5px;
  background: #f23c34;
  font-size: 10px;
  line-height: 15px;
  text-align: center;
}
.count {
  position: absolute;
  left: 23px;
  top: 4px;
  width: 26px;
  height: 20px;
  border-radius: 10px;
  background: #4cc2ff;
  color: #111;
  font-size: 13px;
  line-height: 20px;
  text-align: center;
}
.tray {
  margin-left: auto;
  display: flex;
  align-items: center;
  padding-right: 24px;
  font-size: 14.7px;
  line-height: 20px;
}
.up-arrow {
  margin-right: 22px;
}
.cloud {
  margin-right: 19px;
}
.sync {
  margin-right: 22px;
}
.lang {
  width: 32px;
  text-align: center;
  margin-right: 21px;
  padding-bottom: 2px;
}
.wifi {
  margin-right: 10px;
}
.vol {
  margin-right: 9px;
}
.clock {
  width: 97px;
  text-align: right;
  padding-bottom: 3px;
}
</style>
